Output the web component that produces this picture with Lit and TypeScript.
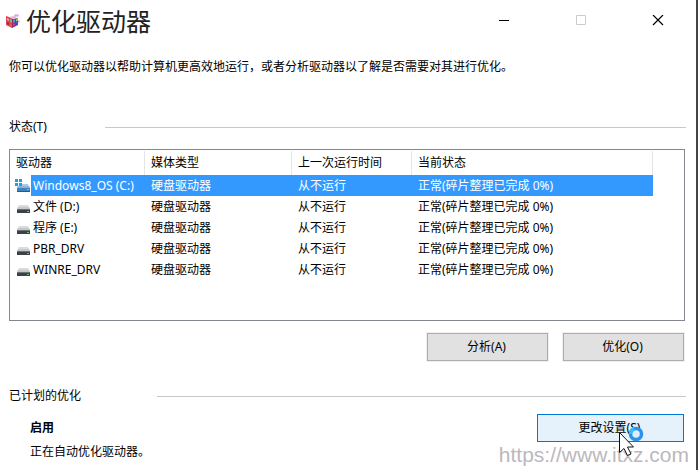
import { LitElement, html, css, svg } from "lit";
import { customElement, property, state } from "lit/decorators.js";
import { classMap } from "lit/directives/class-map.js";

interface Drive {
  name: string;
  media: string;
  lastRun: string;
  status: string;
  system: boolean;
}

const drive = (name: string, system = false): Drive => ({
  name,
  media: "硬盘驱动器",
  lastRun: "从不运行",
  status: "正常(碎片整理已完成 0%)",
  system,
});

const DRIVES: Drive[] = [
  drive("Windows8_OS (C:)", true),
  drive("文件 (D:)"),
  drive("程序 (E:)"),
  drive("PBR_DRV"),
  drive("WINRE_DRV"),
];

@customElement("drive-icon")
export class DriveIcon extends LitElement {
  @property({ type: Boolean }) system = false;

  static styles = css`
    :host { display: block; width: 16px; height: 16px; }
    svg { display: block; }
  `;

  render() {
    return html`<svg width="16" height="16" viewBox="0 0 16 16" aria-hidden="true">
      ${this.system
        ? svg`
          <path d="M4 6h9l2 4H2z" fill="#b4c9de"/>
          <path d="M3 8h11l1 2H2z" fill="#8fb3d4"/>
          <rect x="2" y="10" width="13" height="4" fill="#3d83bf"/>
          <rect x="2" y="13" width="13" height="1" fill="#1f5c94"/>
          <rect x="12" y="11" width="2" height="1" fill="#52e08a"/>
          <path d="M0 1h7v7H0z" fill="#fff"/>
          <path d="M0 1h3v3H0zM4 1h3v3H4zM0 5h3v3H0zM4 5h3v3H4z" fill="#12a5e8"/>`
        : svg`
          <path d="M4 6h9l2 4H2z" fill="#d9dbdd"/>
          <path d="M3 8h11l1 2H2z" fill="#c6c9cb"/>
          <rect x="2" y="10" width="13" height="4" fill="#3d4144"/>
          <rect x="2" y="10" width="13" height="1" fill="#6c7073"/>
          <rect x="12" y="12" width="2" height="1" fill="#35e04a"/>`}
    </svg>`;
  }
}

@customElement("app-root")
export class AppRoot extends LitElement {
  @state() private selected = 0;

  static styles = css`
    :host {
      display: block;
      font: 12px/18px "Noto Sans", "Noto Sans CJK SC", sans-serif;
      font-kerning: none;
      color: #000;
    }
    * { box-sizing: border-box; }
    .window {
      position: relative;
      min-height: 100vh;
      padding-bottom: 8px;
      background: #fff;
      border-right: 2px solid #444;
    }
    .titlebar { display: flex; align-items: center; height: 42px; padding-left: 5px; }
    .titlebar h1 {
      flex: 1;
      margin: 0 0 0 5px;
      font-size: 25px;
      line-height: 40px;
      font-weight: 400;
      color: #222;
    }
    .caption {
      display: grid;
      place-items: center;
      width: 77px;
      height: 40px;
      padding: 0;
      border: 0;
      background: none;
      color: #000;
    }
    .caption:disabled { color: #ccc; }
    main { padding: 16px 10px 0 9px; }
    p { margin: 0; }
    .group { display: flex; align-items: center; height: 20px; }
    .group h2 { margin: 0; font-size: 12px; line-height: 18px; font-weight: 400; }
    .group::after { content: ""; flex: 1; height: 1px; background: #c8c8c8; }
    .status { margin-top: 41px; }
    .status h2 { width: 96px; }
    .plan { margin-top: 24px; }
    .plan h2 { width: 148px; }
    .list { min-height: 172px; margin: 12px 1px 0 0; padding: 1px 31px 0 0; border: 1px solid #828790; }
    table { width: 100%; table-layout: fixed; border-collapse: separate; border-spacing: 0; }
    .c-name { width: 135px; }
    .c-media { width: 147px; }
    .c-last { width: 120px; }
    th, td { padding: 0 0 0 6px; text-align: left; font-weight: 400; white-space: nowrap; }
    th { height: 24px; border-right: 1px solid #e5e5e5; }
    td { height: 21px; }
    td.name { padding: 0; }
    .cell { display: flex; align-items: center; padding-left: 5px; }
    .label { flex: 1; padding-left: 2px; line-height: 21px; }
    .selected td:not(.name), .selected .label { background: #3399ff; color: #fff; }
    .actions { display: flex; justify-content: flex-end; gap: 13px; padding-right: 1px; margin-top: 11px; }
    .push {
      width: 123px;
      height: 30px;
      padding: 0 2px 0 0;
      border: 1px solid #f0f0f0;
      background: #e1e1e1;
      box-shadow: inset 0 0 0 1px #adadad;
      font: inherit;
      color: #000;
    }
    .push.hot { width: 149px; background: #e5f1fb; border-color: #fff; box-shadow: inset 0 0 0 1px #0078d7; }
    .schedule {
      display: flex;
      justify-content: space-between;
      align-items: flex-start;
      margin-top: 7px;
      padding: 0 1px 0 21px;
    }
    .schedule dl { margin: 6px 0 0; }
    dt { font-weight: 700; }
    dd { margin: 6px 0 0; }
    .watermark {
      position: absolute;
      right: 7px;
      bottom: 3px;
      font: 21px/24px "Liberation Sans", sans-serif;
      color: #bcb8bc;
      pointer-events: none;
    }
    .hot-wrap { position: relative; display: flex; }
    .pointer { position: absolute; left: 82px; top: 12px; z-index: 1; pointer-events: none; }
  `;

  render() {
    return html`<div class="window">
      <header class="titlebar">
        <svg width="16" height="16" viewBox="0 0 16 16" aria-hidden="true">
          <path d="M1 3l6 2v10l-6-3z" fill="#d8435c"/>
          <path d="M7 6l6-1v7l-6 3z" fill="#8c2d68"/>
          <path d="M4 4l5-1 3 2-5 1z" fill="#e6b4d0"/>
          <path d="M2 5l2 1v2L2 7z" fill="#f3a6b4"/>
          <path d="M5 6l2 1v3l-2-1z" fill="#5cc878"/>
          <path d="M2 9l2 1v2l-2-1z" fill="#b51c38"/>
          <path d="M5 11l2 1v2l-2-1z" fill="#ee5e34"/>
          <path d="M8 7l2-1v3l-2 1z" fill="#3f9bea"/>
          <path d="M11 6l2-1v3l-2 1z" fill="#7ac85c"/>
          <path d="M8 11l2-1v2l-2 1z" fill="#d13e98"/>
          <path d="M11 9l2-1v3l-2 1z" fill="#3555bd"/>
          <path d="M9 2l2-1 1 2-2 1zM12 1l2 1-1 2-2-1z" fill="#dca0ec"/>
          <path d="M13 7l2 1-1 2-1-1z" fill="#e6a0e0"/>
        </svg>
        <h1>优化驱动器</h1>
        <button class="caption" aria-label="最小化">
          <svg width="12" height="12" shape-rendering="crispEdges"><path d="M1 5h10v1H1z" fill="currentColor"/></svg>
        </button>
        <button class="caption" aria-label="最大化" disabled>
          <svg width="12" height="12"><path d="M1.5 .5h9v9h-9z" fill="none" stroke="currentColor"/></svg>
        </button>
        <button class="caption" aria-label="关闭">
          <svg width="12" height="12"><path d="M1 0l10 10M11 0L1 10" fill="none" stroke="currentColor" stroke-width="1.2"/></svg>
        </button>
      </header>
      <main>
        <p>你可以优化驱动器以帮助计算机更高效地运行，或者分析驱动器以了解是否需要对其进行优化。</p>
        <div class="group status"><h2>状态(T)</h2></div>
        <div class="list">
          <table>
            <colgroup><col class="c-name"><col class="c-media"><col class="c-last"><col></colgroup>
            <thead>
              <tr><th>驱动器</th><th>媒体类型</th><th>上一次运行时间</th><th>当前状态</th></tr>
            </thead>
            <tbody>
              ${DRIVES.map((d, i) => html`<tr
                class=${classMap({ selected: i === this.selected })}
                @click=${() => (this.selected = i)}
              >
                <td class="name"><div class="cell"><drive-icon ?system=${d.system}></drive-icon><span class="label">${d.name}</span></div></td>
                <td>${d.media}</td>
                <td>${d.lastRun}</td>
                <td>${d.status}</td>
              </tr>`)}
            </tbody>
          </table>
        </div>
        <div class="actions">
          <button class="push">分析(A)</button>
          <button class="push">优化(O)</button>
        </div>
        <div class="group plan"><h2>已计划的优化</h2></div>
        <div class="schedule">
          <dl><dt>启用</dt><dd>正在自动优化驱动器。</dd></dl>
          <div class="hot-wrap">
            <button class="push hot">更改设置(S)</button>
            <svg class="pointer" width="30" height="32" viewBox="0 0 30 32" aria-hidden="true">
              <circle cx="18" cy="9" r="5.5" fill="#ddeefa" stroke="#2b93ee" stroke-width="3.5"/>
              <path d="M12.5 9a5.5 5.5 0 0 1 4-5.3" fill="none" stroke="#37bdf8" stroke-width="3.5"/>
              <path d="M1.5 7.5v20l4.5-4 3.5 7 3.500-1.500-3.500-7h6z" fill="#fff" stroke="#111"/>
            </svg>
          </div>
        </div>
      </main>
      <div class="watermark">https://www.itxz.com</div>
    </div>`;
  }
}
